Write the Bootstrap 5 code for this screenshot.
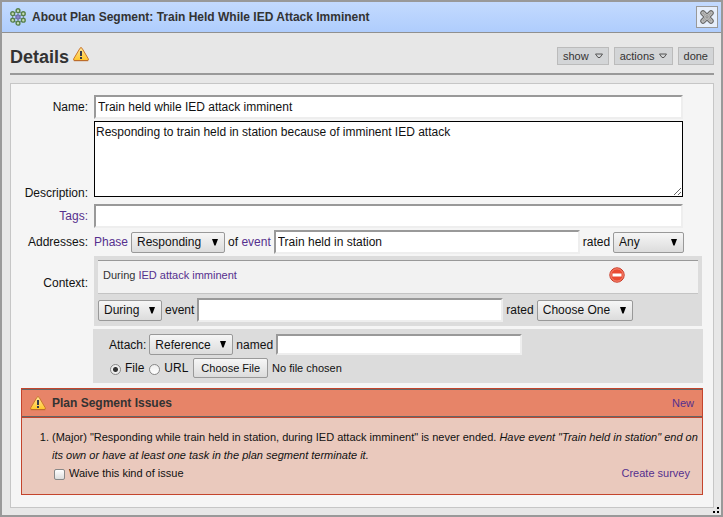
<!DOCTYPE html>
<html lang="en">
<head>
<meta charset="utf-8">
<meta name="viewport" content="width=device-width, initial-scale=1">
<title>About Plan Segment</title>
<link href="https://cdn.jsdelivr.net/npm/bootstrap@5.3.0/dist/css/bootstrap.min.css" rel="stylesheet">
<style>
body { font: 12px/16px "Liberation Sans", Arial, sans-serif; color: #111; background: #e7e7e7; }
a { color: #55308e; text-decoration: none; }
.win { border: 2px solid #999; min-height: 100vh; background: #e7e7e7; }
.titlebar { height: 31px; background: linear-gradient(#c3dafe, #afcdfd); border-bottom: 1px solid #909090; color: #333; padding: 0 3px 0 8px; }
.titlebar h1 { font-size: 12px; line-height: 16px; font-weight: bold; }
.titlebar h1 { margin-left: 6px; }
.closebtn { width: 22px; height: 22px; border: 1px solid #999; background: #e6eefb; padding: 1px; }
.heading { height: 42px; border-bottom: 2px solid #999; margin: 0 7px 0 8px; padding-top: 10px; }
.heading h2 { font-size: 18px; line-height: 20px; font-weight: bold; color: #333; }
.tools { gap: 5px; }
.tool { height: 18px; border: 1px solid #bbb; background: #d3d5d7; color: #333; font-size: 11px; line-height: 14px; padding: 0 5px; border-radius: 0; }
.tool svg { margin-left: 6px; }
.tool-tight svg { margin-left: 4px; }
.panel { margin: 8px 7px 7px 8px; border: 1px solid #c6c6c6; background: #f5f5f5; padding: 11px 10px 12px 10px; }
.lbl { width: 67px; margin-right: 6px; text-align: right; flex: none; }
.lbl-context { padding-top: 19px; }
.txt { border: 2px solid; border-color: #999 #eee #eee #999; background: #fff; height: 24px; padding: 1px 2px; min-width: 0; color: #111; border-radius: 0; }
.area { border: 1px solid #000; background: #fff; height: 76px; padding: 2px 1px; color: #111; resize: both; line-height: 16px; display: block; margin-bottom: 4px; }
.wide { margin-right: 20px; }
.tight { gap: 3px; }
.line-gap { margin-top: 2px; }
.block-gap { margin-top: 3px; }
.pick { appearance: none; height: 21px; border: 1px solid #999; border-radius: 2px; padding: 0 6px 0 5px; color: #111;
  background: url("data:image/svg+xml,%3Csvg xmlns='http://www.w3.org/2000/svg' width='6' height='7'%3E%3Cpath d='M0 0h6L3.6 6.5H2.4z' fill='%23000'/%3E%3C/svg%3E") no-repeat right 6px top 6px, linear-gradient(#f6f6f6, #dcdcdc); }
.w-responding { width: 94px; } .w-any { width: 71px; } .w-during { width: 64px; } .w-choose { width: 96px; } .w-ref { width: 84px; }
.w-event { width: 306px; } .w-named { width: 246px; height: 21px; }
.grey { background: #dcdcdc; padding: 4px; margin-right: 1px; }
.ctx { background: #f2f2f2; border-top: 1px solid #999; border-bottom: 1px solid #c4c4c4; height: 34px; padding: 0 73px 4px 5px; font-size: 11px; color: #333; }
.iconbtn { border: 0; background: none; padding: 0; line-height: 0; }
.attach { margin: 3px 0 0 72px; padding: 5px 16px 5px; }
.filepick { font-size: 11px; line-height: 20px; width: 200px; height: 20px; color: #111; margin-left: 1px; }
.filepick::file-selector-button { font: 11px/16px "Liberation Sans", Arial, sans-serif; color: #111; border: 1px solid #999; border-radius: 2px; background: linear-gradient(#f6f6f6, #dcdcdc); height: 20px; padding: 1px 7px; margin: 0 4px 0 0; }
.dot { appearance: none; width: 11px; height: 11px; border: 1px solid #888; border-radius: 50%; background: linear-gradient(#eee, #fff); margin: 3px 0 0 1px; flex: none; }
.dot:checked { background: radial-gradient(circle, #333 0 2px, #eee 3px); }
.tick { appearance: none; width: 11px; height: 11px; border: 1px solid #888; border-radius: 2px; background: linear-gradient(#fff, #ddd); margin: 2px 0 0 2px; flex: none; }
.issues { border: 1px solid #c4442c; background: #eac9bd; margin-top: 5px; font-size: 11px; line-height: 18px; }
.issues-head { background: #e78468; border-top: 1px solid #666; border-bottom: 1px solid #666; box-shadow: 0 1px #c4442c; height: 28px; padding: 0 8px; }
.issues-head h3 { font-size: 12px; line-height: 16px; font-weight: bold; color: #333; margin-left: 6px; }
.issues ol { padding: 11px 2px 12px 30px; }
.survey { margin-right: 10px; }
.resizer { position: fixed; right: 4px; bottom: 4px; line-height: 0; }
</style>
<script src="https://cdn.jsdelivr.net/npm/bootstrap@5.3.0/dist/js/bootstrap.bundle.min.js"></script>
</head>
<body>
<svg width="0" height="0" class="position-absolute" aria-hidden="true">
  <defs>
    <linearGradient id="amber" x2="0" y2="1"><stop offset="0" stop-color="#ffe69a"/><stop offset="1" stop-color="#ffc629"/></linearGradient>
    <symbol id="warn" viewBox="0 0 16 15">
      <path d="M7 1.2Q8-.2 9 1.2l6.300 10.600q.5 1.700-1 1.700H1.700q-1.500 0-1-1.700z" fill="url(#amber)" stroke="#c9752c"/>
      <path d="M.8 13.700h14.400" stroke="#b96a2c"/>
      <path d="M8 4v5M8 10v2" stroke="#353b4b" stroke-width="2"/>
    </symbol>
  </defs>
</svg>
<main class="win">
  <header class="titlebar d-flex align-items-center">
    <svg width="16" height="18" viewBox="0 0 16 18" aria-hidden="true">
      <g stroke="#7484a8" fill="none"><path d="M8 3l5.500 3v6L8 15l-5.500-3V6zM8 3v12M2.500 6l11 6M13.500 6l-11 6"/></g>
      <g fill="#c5dbb8" stroke="#56804a" stroke-width="1.400"><circle cx="8" cy="2.700" r="1.900"/><circle cx="13.300" cy="5.700" r="1.900"/><circle cx="13.300" cy="12.200" r="1.900"/><circle cx="8" cy="15.200" r="1.900"/><circle cx="2.700" cy="12.200" r="1.900"/><circle cx="2.700" cy="5.700" r="1.900"/></g>
      <circle cx="8" cy="9" r="2.200" fill="#8a86cc" stroke="#5e6699"/>
    </svg>
    <h1 class="mb-0 flex-grow-1">About Plan Segment: Train Held While IED Attack Imminent</h1>
    <button type="button" class="closebtn d-flex align-items-center justify-content-center" aria-label="Close">
      <svg width="16" height="16" viewBox="0 0 16 16"><path d="M4 4l8 8M12 4l-8 8" stroke="#666" stroke-width="5.500" stroke-linecap="round"/><path d="M4 4l8 8M12 4l-8 8" stroke="#bdbdbd" stroke-width="3.500" stroke-linecap="round"/><path d="M4 4l8 8M12 4l-8 8" stroke="#999" stroke-width="2" stroke-dasharray="1 1"/></svg>
    </button>
  </header>

  <div class="heading d-flex justify-content-between">
    <div class="d-flex">
      <h2 class="mb-0 me-1 pt-1">Details</h2>
      <svg class="mt-1" width="16" height="15" role="img" aria-label="Warning"><use href="#warn"/></svg>
    </div>
    <div class="d-flex pt-1 tools">
      <button type="button" class="tool d-flex align-items-center">show <svg width="8" height="6" viewBox="0 0 8 6"><path d="M.5 1h7L5 4.500H3z" fill="none" stroke="#555"/></svg></button>
      <button type="button" class="tool tool-tight d-flex align-items-center">actions <svg width="8" height="6" viewBox="0 0 8 6"><path d="M.5 1h7L5 4.500H3z" fill="none" stroke="#555"/></svg></button>
      <button type="button" class="tool">done</button>
    </div>
  </div>

  <form class="panel">
    <div class="d-flex align-items-center">
      <label class="lbl" for="name">Name:</label>
      <input id="name" class="txt wide flex-grow-1" value="Train held while IED attack imminent">
    </div>
    <div class="d-flex align-items-end line-gap">
      <label class="lbl" for="desc">Description:</label>
      <textarea id="desc" class="area wide flex-grow-1">Responding to train held in station because of imminent IED attack</textarea>
    </div>
    <div class="d-flex align-items-center block-gap">
      <label class="lbl" for="tags"><a href="#">Tags:</a></label>
      <input id="tags" class="txt wide flex-grow-1">
    </div>
    <div class="d-flex align-items-center line-gap">
      <span class="lbl">Addresses:</span>
      <div class="d-flex align-items-center tight flex-grow-1">
        <a href="#">Phase</a>
        <select class="pick w-responding" aria-label="Phase"><option>Responding</option></select>
        <span>of <a href="#">event</a></span>
        <input class="txt w-event" aria-label="Event" value="Train held in station">
        <label for="rated1">rated</label>
        <select id="rated1" class="pick w-any"><option>Any</option></select>
      </div>
    </div>
    <div class="d-flex line-gap">
      <span class="lbl lbl-context">Context:</span>
      <div class="grey flex-grow-1">
        <div class="ctx d-flex align-items-center justify-content-between">
          <span>During <a href="#">IED attack imminent</a></span>
          <button type="button" class="iconbtn" aria-label="Remove"><svg width="16" height="16" viewBox="0 0 16 16"><circle cx="8" cy="8" r="7.200" fill="#ea4a32" stroke="#c83a28"/><circle cx="8" cy="8" r="6.200" fill="none" stroke="#f48a75"/><path d="M3.500 6.500h9v3h-9z" fill="#fff"/></svg></button>
        </div>
        <div class="d-flex align-items-center tight mt-1">
          <select class="pick w-during" aria-label="Timing"><option>During</option></select>
          <label for="ev2">event</label>
          <input id="ev2" class="txt w-event">
          <label for="rated2">rated</label>
          <select id="rated2" class="pick w-choose"><option>Choose One</option></select>
        </div>
      </div>
    </div>
    <div class="grey attach">
      <div class="d-flex align-items-center tight">
        <label for="att">Attach:</label>
        <select id="att" class="pick w-ref"><option>Reference</option></select>
        <label for="named">named</label>
        <input id="named" class="txt w-named">
      </div>
      <div class="d-flex align-items-center gap-1 block-gap">
        <input type="radio" class="dot" name="kind" id="kf" checked><label for="kf">File</label>
        <input type="radio" class="dot" name="kind" id="ku"><label for="ku">URL</label>
        <input type="file" class="filepick" aria-label="Choose file">
      </div>
    </div>
    <section class="issues">
      <div class="issues-head d-flex align-items-center">
        <svg width="16" height="15" role="img" aria-label="Warning"><use href="#warn"/></svg>
        <h3 class="mb-0 flex-grow-1">Plan Segment Issues</h3>
        <a href="#">New</a>
      </div>
      <ol class="mb-0">
        <li>(Major) "Responding while train held in station, during IED attack imminent" is never ended. <em>Have event "Train held in station" end on its own or have at least one task in the plan segment terminate it.</em>
          <div class="d-flex align-items-center">
            <input type="checkbox" class="tick" id="waive"><label class="ms-1 flex-grow-1" for="waive">Waive this kind of issue</label>
            <a class="survey" href="#">Create survey</a>
          </div>
        </li>
      </ol>
    </section>
  </form>
</main>
<div class="resizer" aria-hidden="true"><svg width="6" height="6"><path d="M4 0h2v2H4zM4 4h2v2H4zM0 4h2v2H0z"/></svg></div>
</body>
</html>
